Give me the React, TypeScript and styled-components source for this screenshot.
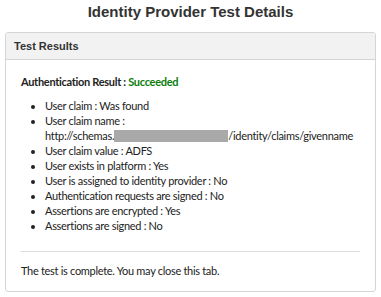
import React from "react";
import styled, { createGlobalStyle } from "styled-components";

const GlobalStyle = createGlobalStyle`
  body {
    margin: 0;
    background: #fff;
    font-family: Lato, "Open Sans", sans-serif;
    color: #222;
  }
`;

const Page = styled.div`
  padding: 0 5px;
`;

const Title = styled.h1`
  margin: 0;
  padding-top: 3px;
  height: 29px;
  text-align: center;
  font-family: "Liberation Sans", Arial, sans-serif;
  font-size: 15px;
  font-weight: bold;
  color: #333;
`;

const Panel = styled.div`
  border: 1px solid #d3d6d8;
  border-radius: 3px;
  overflow: hidden;
`;

const PanelHeader = styled.div`
  background: #f2f2f2;
  border-bottom: 1px solid #d3d6d8;
  height: 26px;
  display: flex;
  align-items: center;
  padding: 0 8px;
  font-family: "Liberation Sans", Arial, sans-serif;
  font-size: 11px;
  font-weight: bold;
  color: #333;
`;

const PanelBody = styled.div`
  padding: 14px 15px 12px;
  font-size: 11px;
  letter-spacing: -0.3px;
`;

const ResultLine = styled.div`
  font-weight: bold;
  line-height: 16px;
`;

const Status = styled.span<{ ok: boolean }>`
  color: ${(p) => (p.ok ? "#0a7d0a" : "#c0392b")};
`;

const List = styled.ul`
  margin: 8px 0 0;
  padding-left: 24px;
  line-height: 15px;
`;

const ClaimUri = styled.span`
  white-space: nowrap;
`;

const Redacted = styled.span`
  display: inline-block;
  width: 114px;
  height: 12px;
  vertical-align: -2px;
  background: #a9a9a9;
`;

const Divider = styled.hr`
  border: none;
  border-top: 1px solid #ddd;
  margin: 18px 0 11px;
`;

const Note = styled.div`
  line-height: 16px;
`;

const items = [
  "User claim : Was found",
  null,
  "User claim value : ADFS",
  "User exists in platform : Yes",
  "User is assigned to identity provider : No",
  "Authentication requests are signed : No",
  "Assertions are encrypted : Yes",
  "Assertions are signed : No",
];

export default function App() {
  return (
    <Page>
      <GlobalStyle />
      <Title>Identity Provider Test Details</Title>
      <Panel>
        <PanelHeader>Test Results</PanelHeader>
        <PanelBody>
          <ResultLine>
            Authentication Result : <Status ok>Succeeded</Status>
          </ResultLine>
          <List>
            {items.map((item, i) =>
              item ? (
                <li key={i}>{item}</li>
              ) : (
                <li key={i}>
                  User claim name :
                  <br />
                  <ClaimUri>
                    http://schemas.<Redacted />/identity/claims/givenname
                  </ClaimUri>
                </li>
              )
            )}
          </List>
          <Divider />
          <Note>The test is complete. You may close this tab.</Note>
        </PanelBody>
      </Panel>
    </Page>
  );
}
